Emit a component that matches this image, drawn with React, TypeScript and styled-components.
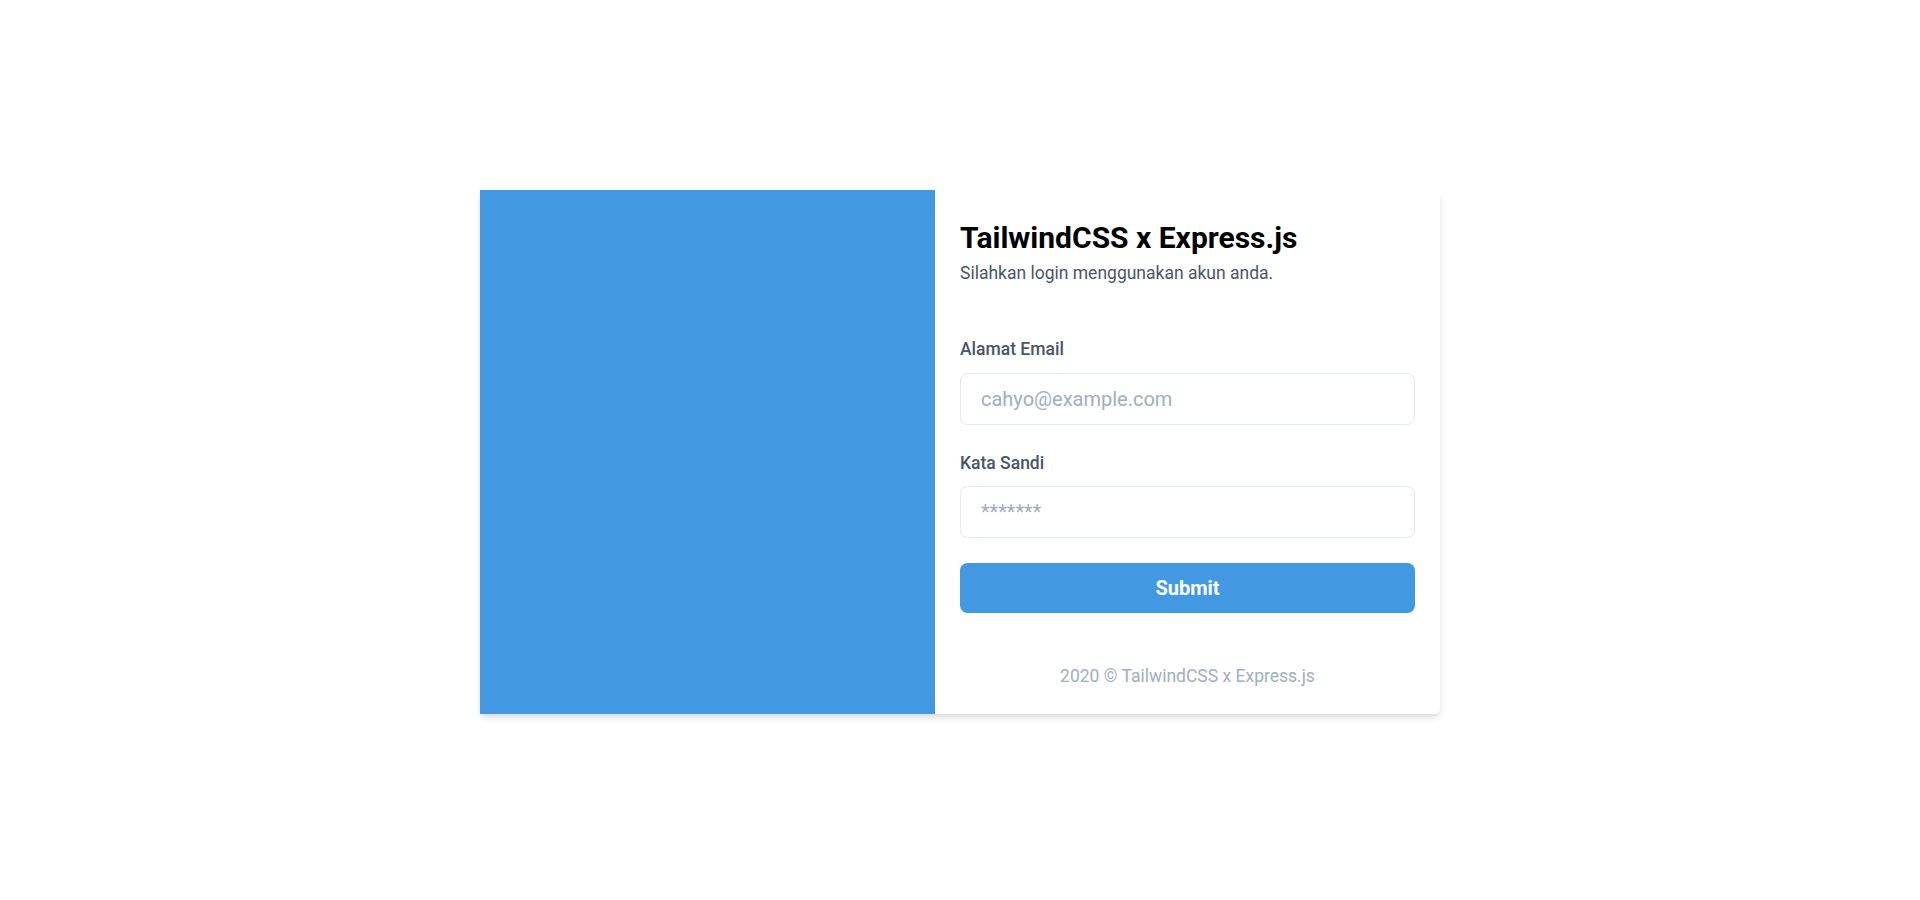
import React from "react";
import styled, { createGlobalStyle } from "styled-components";

const GlobalStyle = createGlobalStyle`
  html, body {
    margin: 0;
    padding: 0;
    background: #ffffff;
    font-family: Roboto, "Liberation Sans", Arial, sans-serif;
  }
  * { box-sizing: border-box; }
`;

const Page = styled.main`
  min-height: 100vh;
  display: flex;
  align-items: center;
  justify-content: center;
  padding-top: 4px;
`;

const Card = styled.section`
  width: 960px;
  display: flex;
  background: #ffffff;
  border-radius: 5px;
  box-shadow: 0 5px 7.5px -1.25px rgba(0, 0, 0, 0.1),
    0 2.5px 5px -1.25px rgba(0, 0, 0, 0.06);
`;

const SidePanel = styled.div`
  width: 455px;
  flex-shrink: 0;
  background: #4299e1;
`;

const FormPanel = styled.div`
  flex: 1;
  padding: 25px;
  display: flex;
  flex-direction: column;
`;

const Title = styled.h1`
  margin: 0;
  font-size: 30px;
  line-height: 45px;
  font-weight: 700;
  color: #000000;
`;

const Subtitle = styled.p`
  margin: 0;
  font-size: 17.5px;
  line-height: 26.25px;
  color: #4a5568;
`;

const Form = styled.form`
  margin-top: 50px;
  display: flex;
  flex-direction: column;
`;

const Field = styled.div<{ $gap?: number }>`
  display: flex;
  flex-direction: column;
  margin-bottom: ${(p) => p.$gap ?? 25}px;
`;

const Label = styled.label`
  font-size: 17.5px;
  line-height: 26.25px;
  font-weight: 500;
  color: #4a5568;
  margin-bottom: 10px;
`;

const Input = styled.input`
  width: 100%;
  height: 52px;
  padding: 10px 20px;
  font-family: inherit;
  font-size: 20px;
  line-height: 30px;
  color: #2d3748;
  background: #ffffff;
  border: 1px solid #e2e8f0;
  border-radius: 7.5px;
  outline: none;
  &::placeholder {
    color: #a0aec0;
  }
`;

const SubmitButton = styled.button`
  width: 100%;
  height: 50px;
  border: none;
  border-radius: 7.5px;
  background: #4299e1;
  color: #ffffff;
  font-family: inherit;
  font-size: 20px;
  line-height: 30px;
  font-weight: 700;
  cursor: pointer;
`;

const Footer = styled.p`
  margin: 50px 0 0;
  text-align: center;
  font-size: 17.5px;
  line-height: 26.25px;
  color: #a0aec0;
`;

export default function App() {
  return (
    <>
      <GlobalStyle />
      <Page>
        <Card>
          <SidePanel />
          <FormPanel>
            <Title>TailwindCSS x Express.js</Title>
            <Subtitle>Silahkan login menggunakan akun anda.</Subtitle>
            <Form onSubmit={(e) => e.preventDefault()}>
              <Field>
                <Label htmlFor="email">Alamat Email</Label>
                <Input id="email" type="email" placeholder="cahyo@example.com" />
              </Field>
              <Field>
                <Label htmlFor="password">Kata Sandi</Label>
                <Input id="password" type="password" placeholder="*******" />
              </Field>
              <SubmitButton type="submit">Submit</SubmitButton>
            </Form>
            <Footer>2020 © TailwindCSS x Express.js</Footer>
          </FormPanel>
        </Card>
      </Page>
    </>
  );
}
